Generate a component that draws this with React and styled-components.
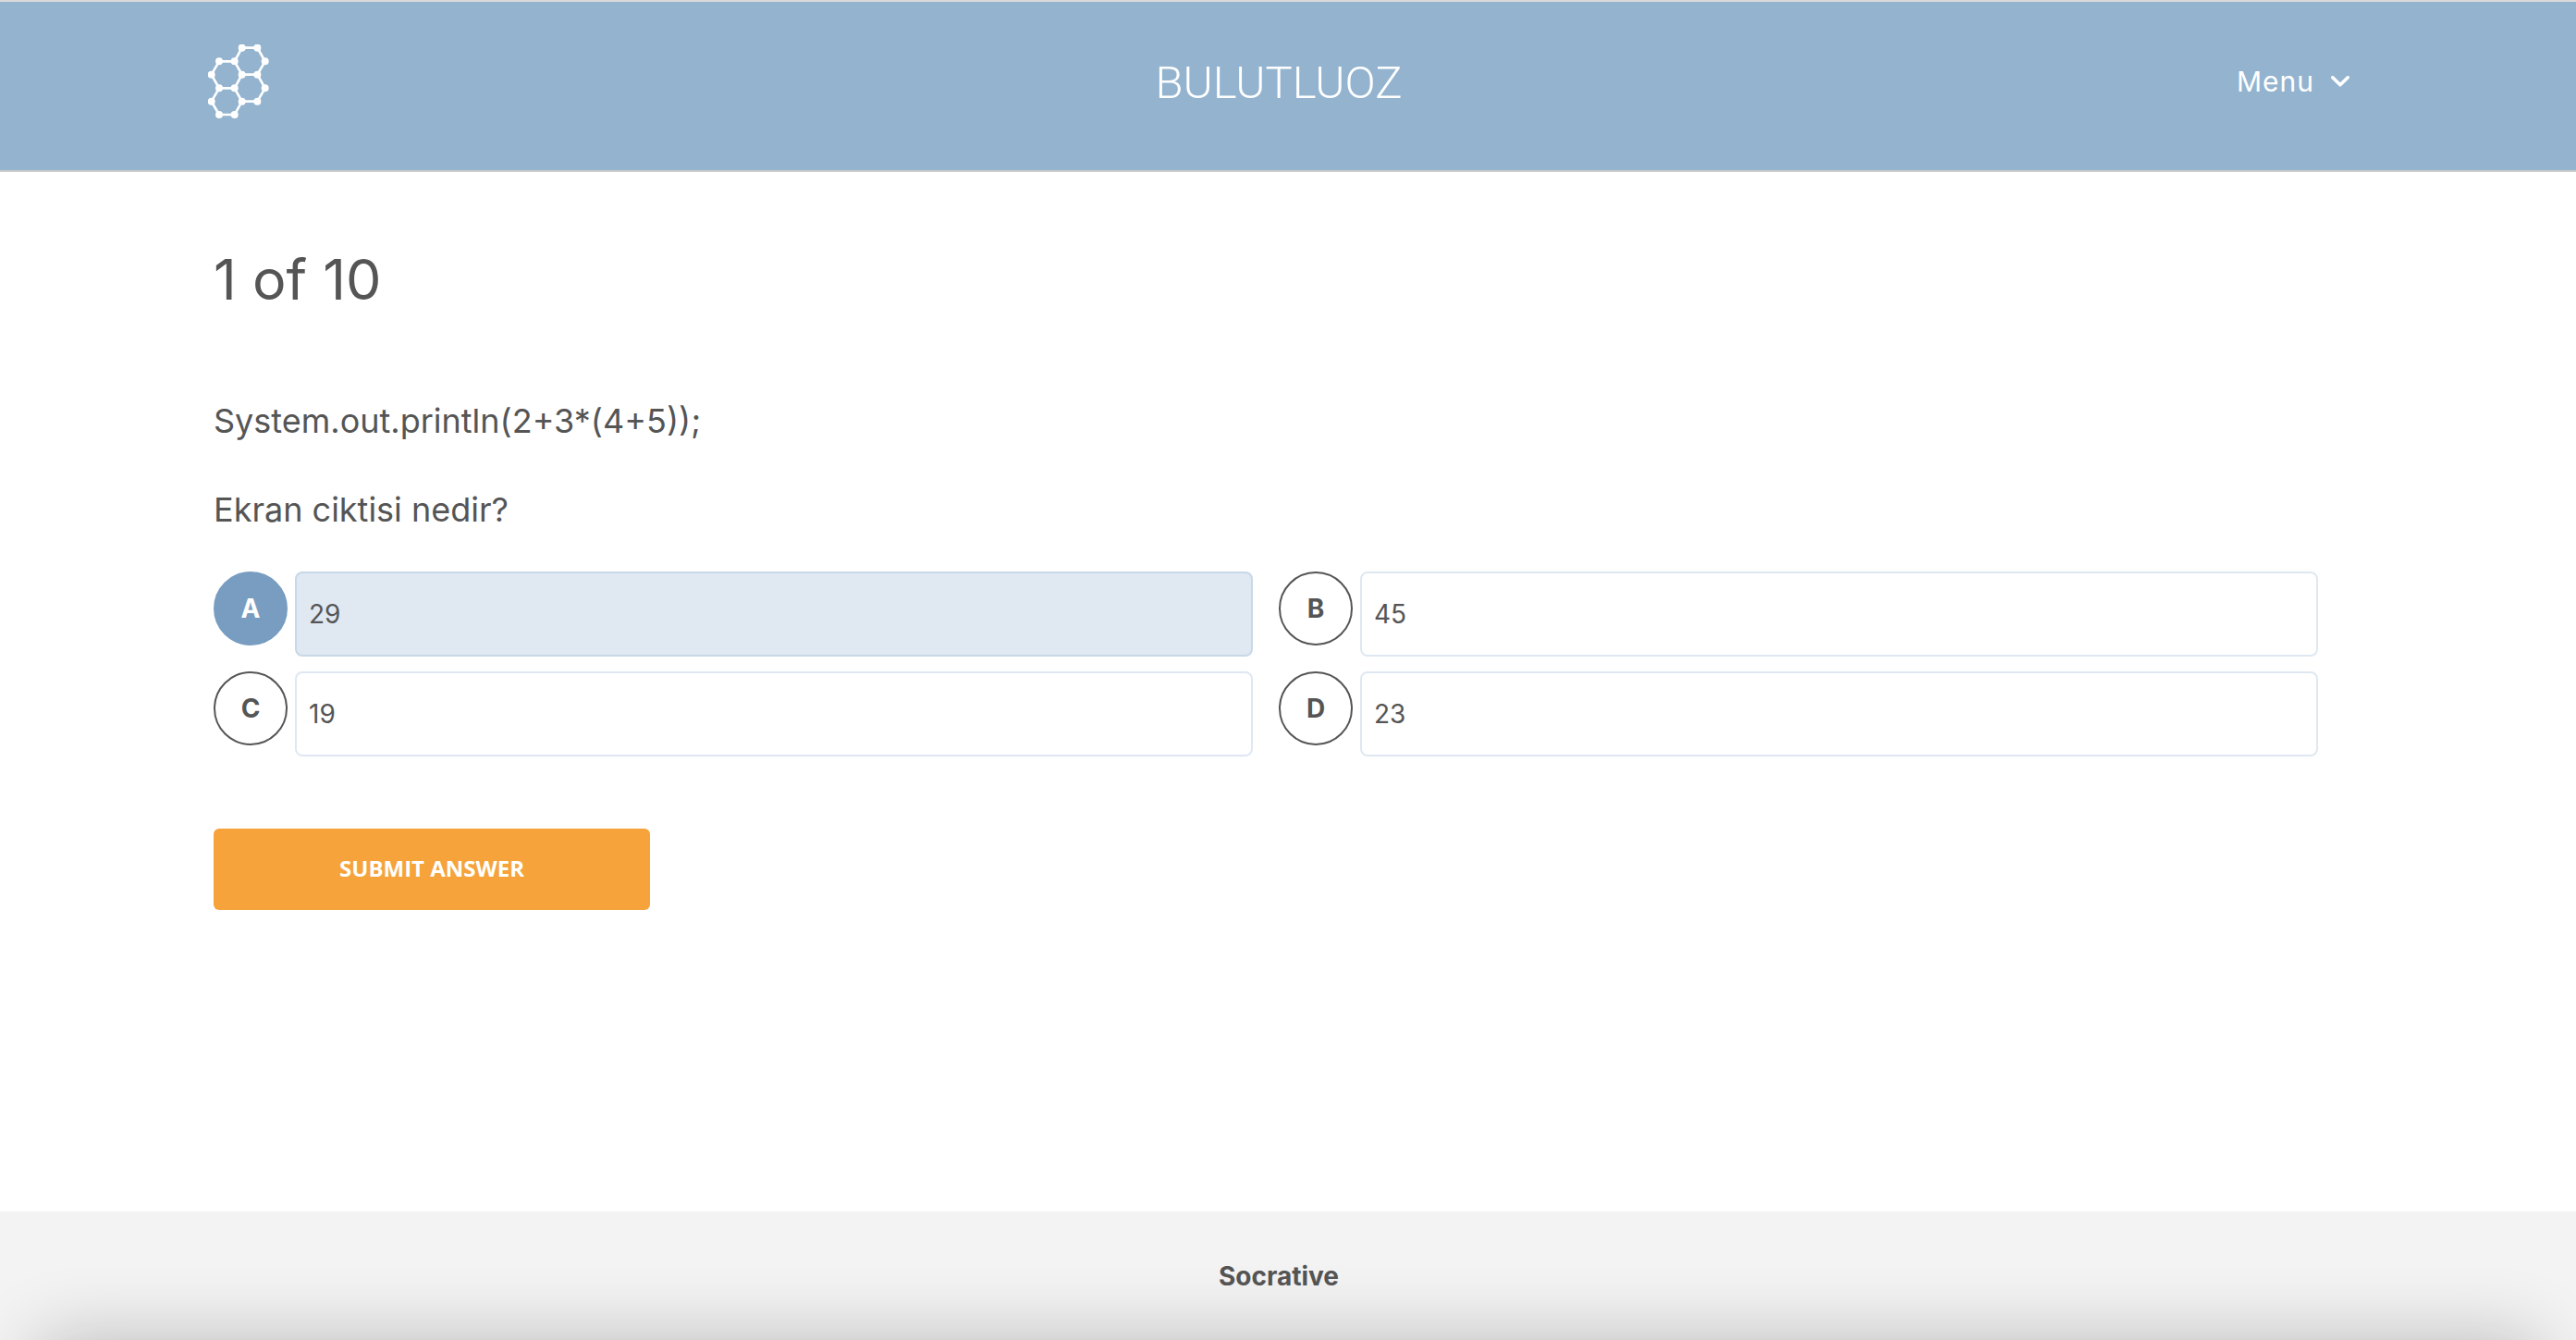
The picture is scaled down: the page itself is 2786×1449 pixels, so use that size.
import React, { useState } from "react";
import styled, { createGlobalStyle } from "styled-components";

const GlobalStyle = createGlobalStyle`
  * { box-sizing: border-box; }
  body {
    margin: 0;
    background: #fff;
    color: #555;
    font-family: Inter, "Liberation Sans", sans-serif;
  }
`;

const Page = styled.div`
  display: flex;
  flex-direction: column;
  min-height: 100vh;
`;

const Header = styled.header`
  padding: 46px 20px 56px 0;
  background: #93b3cf;
  border-top: 2px solid #d9d9d9;
  border-bottom: 2px solid #ccc;
  color: #fff;
`;

const HeaderRow = styled.div`
  display: grid;
  grid-template-columns: 1fr auto 1fr;
  align-items: center;
  width: 92%;
  max-width: 2316px;
  min-height: 80px;
  margin: 0 auto;
`;

const LogoLink = styled.a`
  justify-self: start;
  display: flex;
  color: inherit;
`;

const RoomName = styled.div`
  padding-top: 4px;
  font-family: Roboto, sans-serif;
  font-size: 49px;
  font-weight: 300;
  line-height: 60px;
`;

const MenuButton = styled.button`
  justify-self: end;
  display: flex;
  align-items: center;
  gap: 18px;
  padding: 0;
  border: 0;
  background: none;
  color: inherit;
  font: inherit;
  font-size: 30px;
  line-height: 40px;
  letter-spacing: 1px;
  cursor: pointer;
`;

const Main = styled.main`
  flex: 1;
  padding: 76px 20px 76px 0;
`;

const Quiz = styled.form`
  width: 92%;
  max-width: 2304px;
  margin: 0 auto;
`;

const Progress = styled.h1`
  margin: 0 0 89px;
  font-size: 61px;
  font-weight: 400;
  line-height: 80px;
`;

const Question = styled.div`
  display: flex;
  flex-direction: column;
  gap: 48px;
  font-size: 36px;
  line-height: 48px;
`;

const QuestionLine = styled.p`
  margin: 0;
`;

const Answers = styled.div`
  display: grid;
  grid-template-columns: 1fr 1fr;
  gap: 16px 28px;
  margin: 43px 0 78px;
  padding-right: 28px;
`;

const Answer = styled.label`
  display: flex;
  align-items: flex-start;
  gap: 8px;
  cursor: pointer;
`;

const Letter = styled.span`
  position: relative;
  display: flex;
  flex: none;
  align-items: center;
  justify-content: center;
  width: 80px;
  height: 80px;
  border: 2px solid ${(p) => (p.$selected ? "#789dc1" : "#555")};
  border-radius: 50%;
  background: ${(p) => (p.$selected ? "#789dc1" : "#fff")};
  color: ${(p) => (p.$selected ? "#fff" : "#555")};
  font-size: 28px;
  font-weight: 700;
`;

const Radio = styled.input`
  position: absolute;
  inset: 0;
  margin: 0;
  opacity: 0;
  cursor: pointer;
`;

const AnswerText = styled.span`
  display: flex;
  flex: 1;
  align-items: center;
  min-height: 92px;
  padding: 13px;
  border: 2px solid ${(p) => (p.$selected ? "#c8d8e7" : "#dfe8f2")};
  border-radius: 8px;
  background: ${(p) => (p.$selected ? "#e0e8f2" : "#fff")};
  font-size: 28px;
`;

const SubmitButton = styled.button`
  display: block;
  width: 472px;
  height: 88px;
  padding: 0 0 4px;
  border: 0;
  border-radius: 6px;
  background: #f5a33a;
  color: #fff;
  font-family: "Open Sans", sans-serif;
  font-size: 24px;
  font-weight: 700;
  cursor: pointer;
`;

const Footer = styled.footer`
  position: relative;
  overflow: hidden;
  padding: 50px 20px 49px 0;
  background: #f3f3f3;
  font-size: 28px;
  font-weight: 700;
  line-height: 40px;
  text-align: center;

  &::after {
    content: "";
    position: absolute;
    top: 100%;
    left: 40px;
    right: 40px;
    height: 200px;
    border-radius: 20px;
    box-shadow: 0 0 80px rgba(0, 0, 0, 0.24);
  }
`;

const NODES = [
  [185, 155], [235, 155], [260, 199], [235, 242], [185, 242], [161, 199],
  [111, 199], [86, 242], [111, 286], [161, 286], [260, 286], [235, 329],
  [185, 329], [161, 372], [111, 372], [86, 329],
];

function Logo() {
  return (
    <svg width="66" height="80" viewBox="75 144 198 240" aria-hidden="true">
      <g fill="none" stroke="currentColor" strokeWidth="8">
        <path d="M185 155H235L260 199L235 242H185L161 199Z" />
        <path d="M161 199H111L86 242L111 286H161L185 242" />
        <path d="M235 242L260 286L235 329H185L161 286" />
        <path d="M111 286L86 329L111 372H161L185 329" />
      </g>
      {NODES.map(([x, y]) => (
        <circle key={`${x}-${y}`} cx={x} cy={y} r="12" fill="currentColor" />
      ))}
    </svg>
  );
}

function Chevron() {
  return (
    <svg width="20" height="12" viewBox="0 0 20 12" aria-hidden="true">
      <path
        d="M1.8 1.8L10 9.8L18.2 1.8"
        fill="none"
        stroke="currentColor"
        strokeWidth="3.6"
        strokeLinecap="round"
        strokeLinejoin="round"
      />
    </svg>
  );
}

const CHOICES = [
  { letter: "A", text: "29" },
  { letter: "B", text: "45" },
  { letter: "C", text: "19" },
  { letter: "D", text: "23" },
];

export default function App() {
  const [selected, setSelected] = useState("A");

  return (
    <Page>
      <GlobalStyle />
      <Header>
        <HeaderRow>
          <LogoLink href="#" aria-label="Socrative">
            <Logo />
          </LogoLink>
          <RoomName>BULUTLUOZ</RoomName>
          <MenuButton type="button">
            Menu
            <Chevron />
          </MenuButton>
        </HeaderRow>
      </Header>
      <Main>
        <Quiz onSubmit={(e) => e.preventDefault()}>
          <Progress>1 of 10</Progress>
          <Question id="question">
            <QuestionLine>System.out.println(2+3*(4+5));</QuestionLine>
            <QuestionLine>Ekran ciktisi nedir?</QuestionLine>
          </Question>
          <Answers role="radiogroup" aria-labelledby="question">
            {CHOICES.map(({ letter, text }) => (
              <Answer key={letter}>
                <Letter $selected={selected === letter}>
                  <Radio
                    type="radio"
                    name="answer"
                    value={letter}
                    checked={selected === letter}
                    onChange={() => setSelected(letter)}
                  />
                  {letter}
                </Letter>
                <AnswerText $selected={selected === letter}>{text}</AnswerText>
              </Answer>
            ))}
          </Answers>
          <SubmitButton type="submit">SUBMIT ANSWER</SubmitButton>
        </Quiz>
      </Main>
      <Footer>Socrative</Footer>
    </Page>
  );
}
